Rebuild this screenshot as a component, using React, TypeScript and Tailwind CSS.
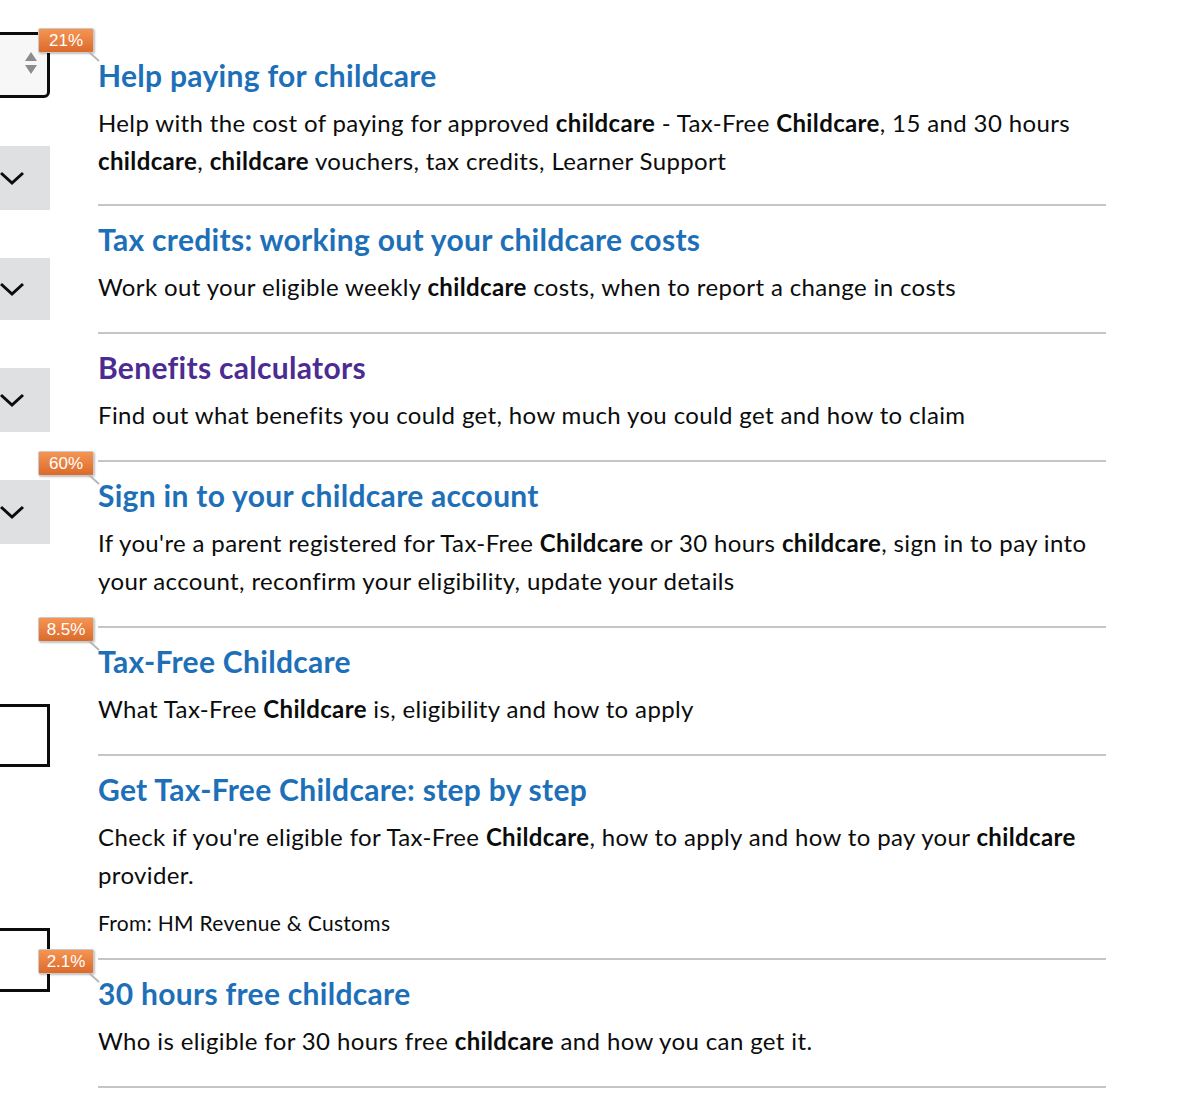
import React from 'react';

type Item = {
  title: string;
  visited?: boolean;
  body: React.ReactNode;
  from?: string;
  badge?: string;
};

const B = ({ children }: { children: React.ReactNode }) => <strong className="font-bold">{children}</strong>;

const items: Item[] = [
  {
    title: 'Help paying for childcare',
    badge: '21%',
    body: (
      <>
        Help with the cost of paying for approved <B>childcare</B> - Tax-Free <B>Childcare</B>, 15 and 30 hours{' '}
        <B>childcare</B>, <B>childcare</B> vouchers, tax credits, Learner Support
      </>
    ),
  },
  {
    title: 'Tax credits: working out your childcare costs',
    body: (
      <>
        Work out your eligible weekly <B>childcare</B> costs, when to report a change in costs
      </>
    ),
  },
  {
    title: 'Benefits calculators',
    visited: true,
    body: <>Find out what benefits you could get, how much you could get and how to claim</>,
  },
  {
    title: 'Sign in to your childcare account',
    badge: '60%',
    body: (
      <>
        If you're a parent registered for Tax-Free <B>Childcare</B> or 30 hours <B>childcare</B>, sign in to pay into
        your account, reconfirm your eligibility, update your details
      </>
    ),
  },
  {
    title: 'Tax-Free Childcare',
    badge: '8.5%',
    body: (
      <>
        What Tax-Free <B>Childcare</B> is, eligibility and how to apply
      </>
    ),
  },
  {
    title: 'Get Tax-Free Childcare: step by step',
    body: (
      <>
        Check if you're eligible for Tax-Free <B>Childcare</B>, how to apply and how to pay your <B>childcare</B>{' '}
        provider.
      </>
    ),
    from: 'From: HM Revenue & Customs',
  },
  {
    title: '30 hours free childcare',
    badge: '2.1%',
    body: (
      <>
        Who is eligible for 30 hours free <B>childcare</B> and how you can get it.
      </>
    ),
  },
];

// percentage flag that hangs over the left edge of a result
const Badge = ({ label, first }: { label: string; first?: boolean }) => (
  <div className={`absolute left-[-60px] z-10 ${first ? 'top-[-14px]' : 'top-[-11px]'}`}>
    <div className="flex h-[25px] w-[56px] items-center justify-center rounded-[2px] border border-[#c9c9c9] bg-gradient-to-b from-[#f59553] to-[#db6a2a] font-['Liberation_Sans',sans-serif] text-[17px] leading-none text-white shadow-[1px_1px_2px_rgba(0,0,0,0.25)]">
      {label}
    </div>
    <svg className="absolute left-[50px] top-[23px]" width="14" height="12" viewBox="0 0 14 12">
      <path d="M1 1 L11 10" stroke="#b8b8b8" strokeWidth="2" fill="none" />
    </svg>
  </div>
);

const Chevron = () => (
  <svg width="26" height="16" viewBox="0 0 26 16">
    <path d="M2 3 L13 13 L24 3" stroke="#0b0c0c" strokeWidth="3" fill="none" />
  </svg>
);

const Sidebar = () => (
  <div className="flex w-[50px] shrink-0 flex-col items-end overflow-hidden pt-[32px]">
    <div className="relative h-[66px] w-[90px] shrink-0 rounded-br-[6px] border-[3px] border-[#0b0c0c] bg-[#f7f7f7]">
      <svg className="absolute right-[9px] top-[15px]" width="14" height="26" viewBox="0 0 14 26">
        <path d="M7 2 L13 11 L1 11 Z" fill="#8c8c8c" />
        <path d="M1 15 L13 15 L7 24 Z" fill="#8c8c8c" />
      </svg>
    </div>
    <div className="mt-[48px] mr-[-1px] flex h-[64px] w-[79px] shrink-0 items-center justify-center bg-[#dee0e2]">
      <Chevron />
    </div>
    <div className="mt-[48px] mr-[-1px] flex h-[62px] w-[79px] shrink-0 items-center justify-center bg-[#dee0e2]">
      <Chevron />
    </div>
    <div className="mt-[48px] mr-[-1px] flex h-[64px] w-[79px] shrink-0 items-center justify-center bg-[#dee0e2]">
      <Chevron />
    </div>
    <div className="mt-[48px] mr-[-1px] flex h-[64px] w-[79px] shrink-0 items-center justify-center bg-[#dee0e2]">
      <Chevron />
    </div>
    <div className="mt-[160px] h-[63px] w-[90px] shrink-0 border-[3px] border-[#0b0c0c] bg-white" />
    <div className="mt-[161px] h-[64px] w-[90px] shrink-0 border-[3px] border-[#0b0c0c] bg-white" />
  </div>
);

export default function App() {
  return (
    <div className="min-h-screen bg-white font-['Lato',sans-serif] text-[#0b0c0c]">
      <div className="flex">
        <Sidebar />
        <ul className="ml-[48px] w-[1008px] pt-[42px]">
          {items.map((item, i) => (
            <li
              key={i}
              className={`relative border-b-2 border-[#c4c5c6] pt-[15px] ${
                item.from ? 'pb-[20px]' : i === 0 ? 'pb-[24px]' : 'pb-[26px]'
              }`}
            >
              {item.badge && <Badge label={item.badge} first={i === 0} />}
              <a
                href="#"
                className={`block text-[30px] font-bold leading-[36px] tracking-[0.3px] ${
                  item.visited ? 'text-[#4c2c92]' : 'text-[#1d70b8]'
                }`}
              >
                {item.title}
              </a>
              <p className="mt-[11px] text-[24px] leading-[38px] tracking-[0.37px]">{item.body}</p>
              {item.from && (
                <p className="mt-[14px] text-[21px] leading-[30px] tracking-[0.3px]">{item.from}</p>
              )}
            </li>
          ))}
        </ul>
      </div>
    </div>
  );
}
